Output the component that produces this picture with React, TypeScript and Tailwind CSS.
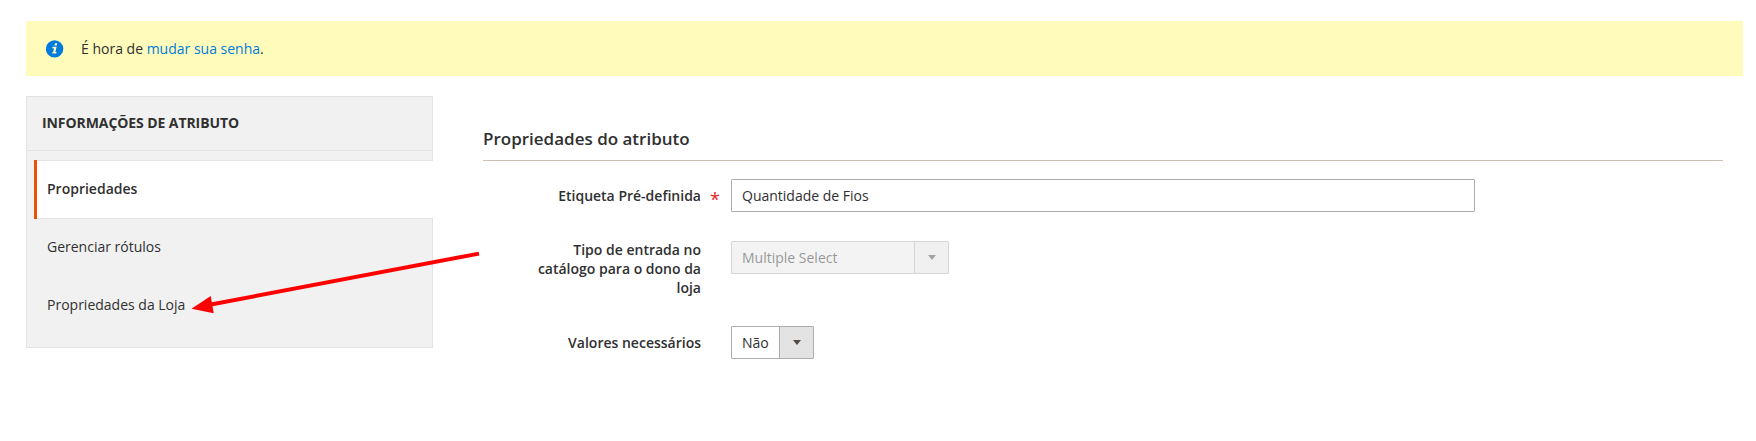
import type { ReactNode } from "react";

function Notice() {
  return (
    <div className="flex h-[55px] items-center bg-[#fffbbb] pl-5">
      <svg className="h-[18px] w-[18px] shrink-0" viewBox="0 0 18 18">
        <circle cx="8.6" cy="8.9" r="8.7" fill="#007bdb" />
        <path d="M8.9 3.3h2.4l-.5 2.3H8.4z" fill="#fffbbb" />
        <path d="M6.5 6.7h4.1l-1.2 5.3h1.2l-.4 1.5H6.2l.4-1.5h.6l.8-3.8H6.1z" fill="#fffbbb" />
      </svg>
      <p className="ml-[17px]">
        É hora de <a className="text-[#007bdb]">mudar sua senha</a>.
      </p>
    </div>
  );
}

function SideNav() {
  return (
    <nav className="h-[252px] w-[407px] shrink-0 border border-[#e3e3e3] bg-[#f1f1f1]">
      <h3 className="flex h-[54px] items-center border-b border-[#e3e3e3] pb-[2px] pl-[15px] font-bold tracking-[-0.08px]">
        INFORMAÇÕES DE ATRIBUTO
      </h3>
      <ul className="-mr-px pt-[9px] pl-[7px]">
        <li className="flex h-[59px] bg-white font-semibold">
          <span className="w-[3px] bg-[#eb5202]" />
          <span className="flex flex-1 items-center border-y border-[#e3e3e3] pb-[2px] pl-[10px]">Propriedades</span>
        </li>
        <li className="flex h-[58px] items-center pb-[3px] pl-[13px]">Gerenciar rótulos</li>
        <li className="flex h-[58px] items-center pb-[3px] pl-[13px]">Propriedades da Loja</li>
      </ul>
    </nav>
  );
}

function Field({
  label,
  required,
  multiline,
  children,
}: {
  label: string;
  required?: boolean;
  multiline?: boolean;
  children: ReactNode;
}) {
  return (
    <div className="flex items-start">
      <label className={`w-[170px] text-right leading-[19px] font-semibold ${multiline ? "-mt-px" : "pt-[7px]"}`}>
        {label}
      </label>
      <span className="w-[30px] pt-[9px] pl-[9px] text-[18px] leading-[22px] text-[#e22626]">
        {required ? "*" : ""}
      </span>
      {children}
    </div>
  );
}

function Select({ value, width, disabled }: { value: string; width: string; disabled?: boolean }) {
  return (
    <div
      className={`flex h-[33px] rounded-[1px] border border-[#adadad] ${width} ${
        disabled ? "bg-[#e9e9e9] opacity-50" : "bg-white"
      }`}
    >
      <span className="flex flex-1 items-center pl-[10px]">{value}</span>
      <span className="flex w-[34px] items-center justify-center border-l border-[#adadad] bg-[#e3e3e3]">
        <svg className="h-[5px] w-2" viewBox="0 0 8 5">
          <path d="M0 0h8L4 5z" fill="#514943" />
        </svg>
      </span>
    </div>
  );
}

export default function App() {
  return (
    <div className="relative h-[441px] bg-white pt-[21px] pr-[13px] pl-[26px] font-['Open_Sans',sans-serif] text-[14px] leading-[19px] text-[#303030]">
      <Notice />
      <div className="mt-5 flex">
        <SideNav />
        <main className="ml-[50px] w-[1240px]">
          <h2 className="flex h-[65px] items-end border-b border-[#cac3b4] pb-[9px] text-[17px] leading-[24px] font-semibold">
            Propriedades do atributo
          </h2>
          <div className="flex flex-col pt-[18px] pl-12">
            <Field label="Etiqueta Pré-definida" required>
              <div className="flex h-[33px] w-[744px] items-center rounded-[1px] border border-[#adadad] pl-[10px]">
                Quantidade de Fios
              </div>
            </Field>
            <div className="mt-[29px] h-[56px]">
              <Field label="Tipo de entrada no catálogo para o dono da loja" multiline>
                <Select value="Multiple Select" width="w-[218px]" disabled />
              </Field>
            </div>
            <div className="mt-[29px]">
              <Field label="Valores necessários">
                <Select value="Não" width="w-[83px]" />
              </Field>
            </div>
          </div>
        </main>
      </div>
      <svg className="pointer-events-none absolute top-[245px] left-[185px] h-[80px] w-[300px]" viewBox="185 245 300 80">
        <path d="M211 304.5L479 253.6" stroke="#f00" strokeWidth="4" />
        <path d="M191.5 308.7L210.7 296L213.7 313.3z" fill="#f00" />
      </svg>
    </div>
  );
}
